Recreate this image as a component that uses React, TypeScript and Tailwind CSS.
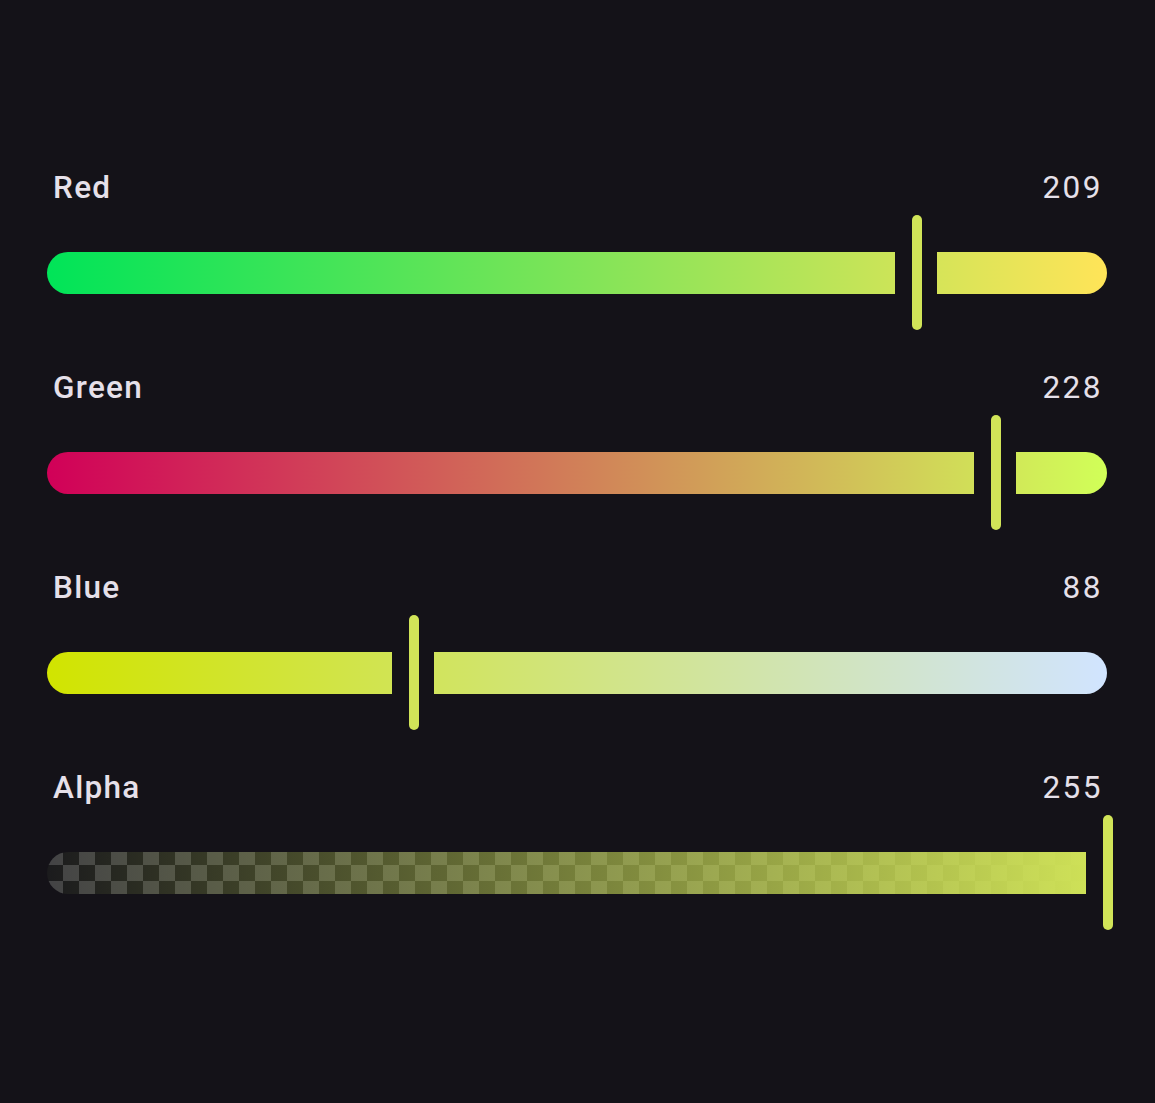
import { type ReactNode } from 'react';

// track geometry, in px
const TRACK_WIDTH = 1060;
const THUMB_WIDTH = 10.5;
const THUMB_GAP = 15.75;
const MAX = 255;

type Channel = {
  label: string;
  value: number;
  track: string;
};

const channels: Channel[] = [
  { label: 'Red', value: 209, track: 'bg-[linear-gradient(to_right,#00e458,#ffe458)]' },
  { label: 'Green', value: 228, track: 'bg-[linear-gradient(to_right,#d10058,#d1ff58)]' },
  { label: 'Blue', value: 88, track: 'bg-[linear-gradient(to_right,#d1e400,#d1e4ff)]' },
  {
    label: 'Alpha',
    value: 255,
    track:
      '[background:linear-gradient(to_right,#d1e45800,#d1e458)_0_0/1060px_100%,conic-gradient(#1b1b1d_25%,#434345_0_50%,#1b1b1d_0_75%,#434345_0)_0_-3px/32px_32px]',
  },
];

function Segment({ className, width, children }: { className: string; width?: number; children?: ReactNode }) {
  return (
    <div
      className={`h-[42px] ${width === undefined ? 'flex-1 min-w-0' : 'shrink-0'} ${className}`}
      style={width === undefined ? undefined : { width }}
    >
      {children}
    </div>
  );
}

function ChannelSlider({ channel }: { channel: Channel }) {
  const fraction = channel.value / MAX;
  const activeWidth = Math.max(0, fraction * TRACK_WIDTH - THUMB_WIDTH / 2 - THUMB_GAP);
  const isAlpha = channel.label === 'Alpha';

  return (
    <div>
      <div className="flex items-center justify-between pl-[6px] pr-[4px] leading-[42px] text-[31.5px] text-[#e6e0e9]">
        <span className="font-medium tracking-[1.3px]">{channel.label}</span>
        <span className="font-normal tracking-[2.5px]">{channel.value}</span>
      </div>
      <div className="mt-[6px] flex h-[115px] w-full items-center">
        <Segment
          width={activeWidth}
          className={`rounded-l-full rounded-r-[5px] bg-[length:1060px_100%] bg-left ${channel.track}`}
        />
        <div className="ml-[15.75px] mr-[15.75px] h-[115px] w-[10.5px] shrink-0 translate-x-[1px] rounded-full bg-[#d1e458]" />
        {!isAlpha && (
          <Segment className={`rounded-l-[5px] rounded-r-full bg-[length:1060px_100%] bg-right ${channel.track}`} />
        )}
      </div>
    </div>
  );
}

export default function App() {
  return (
    <div className="h-[1103px] w-full bg-[#141218] pt-[167px] pl-[47px] pr-[48px] font-['Roboto',sans-serif]">
      <div className="flex flex-col gap-[37px]">
        {channels.map((c) => (
          <ChannelSlider key={c.label} channel={c} />
        ))}
      </div>
    </div>
  );
}
